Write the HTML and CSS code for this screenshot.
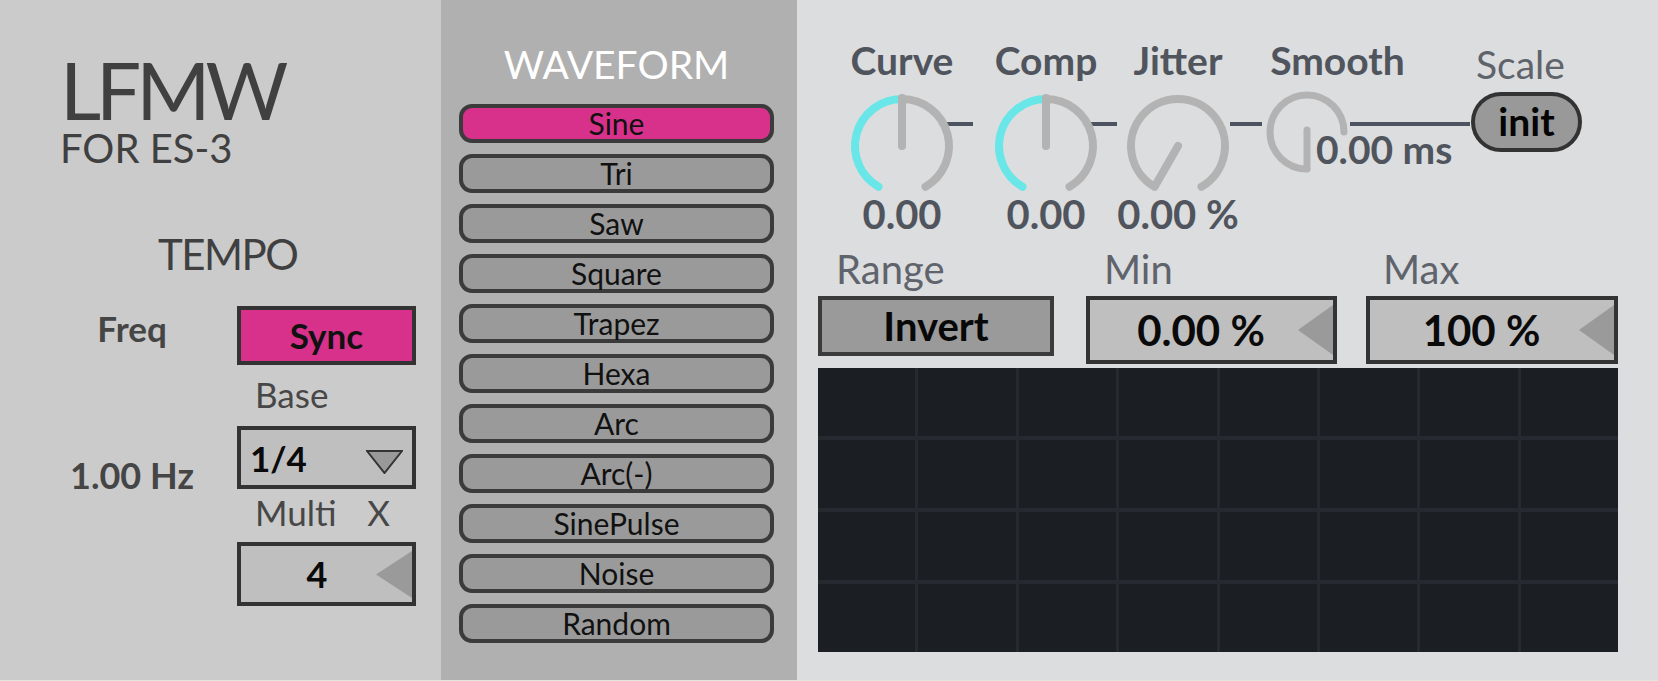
FILE: index.html
```html
<!DOCTYPE html>
<html>
<head>
<meta charset="utf-8">
<title>LFMW for ES-3</title>
<link rel="stylesheet" href="styles.css">
</head>
<body>
<div class="app">
  <section class="panel panel-main">
    <h1 class="title">LFMW</h1>
    <div class="subtitle">FOR ES-3</div>
    <div class="section-title">TEMPO</div>
    <div class="tempo">
      <div class="tempo-labels">
        <div class="freq-label">Freq</div>
        <div class="freq-value">1.00 Hz</div>
      </div>
      <div class="tempo-controls">
        <div class="toggle">Sync</div>
        <div class="ctl-label">Base</div>
        <div class="menu">
          <span>1/4</span>
          <svg class="menu-arrow" width="37" height="24" viewBox="0 0 37 24"><polygon points="1,1 36,1 18.5,23" fill="#999" stroke="#333" stroke-width="2" stroke-linejoin="miter"/></svg>
        </div>
        <div class="ctl-label multi"><span>Multi</span><span>X</span></div>
        <div class="numbox numbox-small">
          <span class="num">4</span>
          <svg width="36" height="47" viewBox="0 0 36 47"><polygon points="36,0 36,47 0,23.5" fill="#9a9a9a"/></svg>
        </div>
      </div>
    </div>
  </section>

  <section class="panel panel-wave">
    <div class="wave-title">WAVEFORM</div>
    <div class="wave-list">
      <div class="wave-btn on">Sine</div>
      <div class="wave-btn">Tri</div>
      <div class="wave-btn">Saw</div>
      <div class="wave-btn">Square</div>
      <div class="wave-btn">Trapez</div>
      <div class="wave-btn">Hexa</div>
      <div class="wave-btn">Arc</div>
      <div class="wave-btn">Arc(-)</div>
      <div class="wave-btn">SinePulse</div>
      <div class="wave-btn">Noise</div>
      <div class="wave-btn">Random</div>
    </div>
  </section>

  <section class="panel panel-mod">
    <div class="knob-row">
      <div class="knob">
        <div class="knob-label">Curve</div>
        <svg width="110" height="114" viewBox="0 0 110 114">
          <line x1="96" y1="44" x2="126" y2="44" stroke="#4d5360" stroke-width="4"/>
          <path d="M31.5 106.7 A47 47 0 0 1 55 19" fill="none" stroke="#68e6e8" stroke-width="8" stroke-linecap="round"/>
          <path d="M55 19 A47 47 0 0 1 78.5 106.7" fill="none" stroke="#b3b3b3" stroke-width="8" stroke-linecap="round"/>
          <line x1="55" y1="66" x2="55" y2="18" stroke="#b3b3b3" stroke-width="8" stroke-linecap="round"/>
        </svg>
        <div class="knob-value">0.00</div>
      </div>
      <div class="knob k2">
        <div class="knob-label">Comp</div>
        <svg width="110" height="114" viewBox="0 0 110 114">
          <line x1="96" y1="44" x2="126" y2="44" stroke="#4d5360" stroke-width="4"/>
          <path d="M31.5 106.7 A47 47 0 0 1 55 19" fill="none" stroke="#68e6e8" stroke-width="8" stroke-linecap="round"/>
          <path d="M55 19 A47 47 0 0 1 78.5 106.7" fill="none" stroke="#b3b3b3" stroke-width="8" stroke-linecap="round"/>
          <line x1="55" y1="66" x2="55" y2="18" stroke="#b3b3b3" stroke-width="8" stroke-linecap="round"/>
        </svg>
        <div class="knob-value">0.00</div>
      </div>
      <div class="knob k3">
        <div class="knob-label">Jitter</div>
        <svg width="110" height="114" viewBox="0 0 110 114">
          <line x1="107" y1="44" x2="139" y2="44" stroke="#4d5360" stroke-width="4"/>
          <path d="M31.5 106.7 A47 47 0 1 1 78.5 106.7" fill="none" stroke="#b3b3b3" stroke-width="8" stroke-linecap="round"/>
          <line x1="55" y1="66" x2="32" y2="106" stroke="#b3b3b3" stroke-width="8" stroke-linecap="round"/>
        </svg>
        <div class="knob-value">0.00 %</div>
      </div>
      <div class="knob knob-smooth">
        <div class="knob-label">Smooth</div>
        <svg width="151" height="100" viewBox="0 0 151 100">
          <line x1="88" y1="44" x2="208" y2="44" stroke="#4d5360" stroke-width="4"/>
          <path d="M45 89 A37 37 0 1 1 82 52" fill="none" stroke="#b3b3b3" stroke-width="7" stroke-linecap="round"/>
          <line x1="45" y1="50" x2="45" y2="88" stroke="#b3b3b3" stroke-width="7" stroke-linecap="round"/>
        </svg>
        <div class="knob-value smooth-value">0.00 ms</div>
      </div>
      <div class="knob knob-scale">
        <div class="scale-label">Scale</div>
        <div class="pill">init</div>
      </div>
    </div>

    <div class="range-row">
      <div class="range-col col-range">
        <div class="range-label">Range</div>
        <div class="range-btn">Invert</div>
      </div>
      <div class="range-col col-min">
        <div class="range-label">Min</div>
        <div class="numbox numbox-wide">
          <span class="num">0.00 %</span>
          <svg width="35" height="50" viewBox="0 0 35 50"><polygon points="35,0 35,50 0,25" fill="#9a9a9a"/></svg>
        </div>
      </div>
      <div class="range-col col-max">
        <div class="range-label">Max</div>
        <div class="numbox numbox-wide">
          <span class="num">100 %</span>
          <svg width="35" height="50" viewBox="0 0 35 50"><polygon points="35,0 35,50 0,25" fill="#9a9a9a"/></svg>
        </div>
      </div>
    </div>

    <div class="scope">
      <div></div><div></div><div></div><div></div><div></div><div></div><div></div><div></div>
      <div></div><div></div><div></div><div></div><div></div><div></div><div></div><div></div>
      <div></div><div></div><div></div><div></div><div></div><div></div><div></div><div></div>
      <div></div><div></div><div></div><div></div><div></div><div></div><div></div><div></div>
    </div>
  </section>
</div>
</body>
</html>
```

FILE: styles.css
```css
* { box-sizing: border-box; }

html, body {
  margin: 0;
  padding: 0;
}

body {
  width: 1658px;
  height: 681px;
  overflow: hidden;
  background: #e4e4de;
  font-family: Lato, "Open Sans", "DejaVu Sans", sans-serif;
}

.app {
  display: flex;
  height: 680px;
}

.panel { height: 680px; }

/* ---------- left panel ---------- */
.panel-main {
  width: 441px;
  background: #cbcbcb;
  color: #404040;
}

.title {
  margin: 54px 0 0 60px;
  font-size: 80px;
  line-height: 70px;
  letter-spacing: -5px;
  font-weight: 400;
  color: #404040;
}

.subtitle {
  margin: 5px 0 0 60px;
  font-size: 40px;
  line-height: 38px;
}

.section-title {
  margin: 66px 0 0 158px;
  font-size: 42px;
  line-height: 42px;
  letter-spacing: -1.5px;
}

.tempo {
  display: flex;
  padding-left: 27px;
}

.tempo-labels {
  width: 210px;
  text-align: center;
  font-weight: 700;
  color: #454545;
}

.freq-label {
  margin-top: 36px;
  font-size: 35px;
  line-height: 35px;
}

.freq-value {
  margin-top: 111px;
  font-size: 36px;
  line-height: 36px;
}

.tempo-controls {
  width: 179px;
  padding-top: 31px;
  display: flex;
  flex-direction: column;
}

.toggle {
  height: 59px;
  border: 4px solid #333;
  background: #d8318b;
  display: flex;
  align-items: center;
  justify-content: center;
  padding-bottom: 2px;
  font-size: 35px;
  font-weight: 700;
  color: #111;
}

.ctl-label {
  margin-top: 12px;
  padding-left: 18px;
  font-size: 35px;
  line-height: 35px;
  color: #474747;
}

.ctl-label.multi {
  margin-top: 6px;
  display: flex;
  justify-content: space-between;
  padding-right: 26px;
}

.menu {
  margin-top: 14px;
  height: 63px;
  border: 4px solid #333;
  background: #bfbfbf;
  display: flex;
  align-items: center;
  justify-content: space-between;
  padding: 0 9px 0 9px;
  font-size: 35px;
  font-weight: 700;
  color: #0a0a0a;
}

.menu-arrow {
  display: block;
  margin-top: 9px;
}

.numbox {
  border: 4px solid #333;
  background: #bfbfbf;
  display: flex;
  align-items: center;
  color: #0a0a0a;
}

.numbox svg { display: block; flex: none; }

.numbox .num {
  flex: 1;
  text-align: center;
}

.numbox-small {
  margin-top: 12px;
  height: 64px;
  font-size: 36px;
  font-weight: 700;
}

.numbox-small .num { padding-left: 17px; }

/* ---------- waveform panel ---------- */
.panel-wave {
  width: 356px;
  background: #b0b0b0;
  padding: 0 23px 0 18px;
}

.wave-title {
  margin-top: 45px;
  font-size: 39px;
  line-height: 39px;
  text-align: center;
  color: #ffffff;
}

.wave-list {
  margin-top: 20px;
  display: flex;
  flex-direction: column;
  gap: 11px;
}

.wave-btn {
  height: 39px;
  border: 4px solid #3b3b3b;
  border-radius: 13px;
  background: #9a9a9a;
  display: flex;
  align-items: center;
  justify-content: center;
  padding-bottom: 1px;
  font-size: 30px;
  line-height: 30px;
  color: #111;
}

.wave-btn.on { background: #d8318b; }

/* ---------- modulation panel ---------- */
.panel-mod {
  flex: 1;
  background: #dcdddf;
  padding-left: 21px;
}

.knob-row {
  display: flex;
  align-items: flex-start;
  padding: 41px 0 0 29px;
}

.knob {
  width: 110px;
  display: flex;
  flex-direction: column;
  align-items: center;
  color: #50555d;
}

.knob svg {
  display: block;
  overflow: visible;
}

.k2 { margin-left: 34px; }
.k3 { margin-left: 22px; }

.knob-label {
  font-size: 39px;
  line-height: 39px;
  font-weight: 700;
  white-space: nowrap;
}

.knob-value {
  font-size: 40px;
  line-height: 40px;
  font-weight: 700;
  white-space: nowrap;
}

.knob-smooth {
  width: 151px;
  margin-left: 29px;
  align-items: stretch;
}

.knob-smooth .knob-label { text-align: center; }

.smooth-value {
  margin-top: -50px;
  padding-left: 54px;
  font-size: 39px;
  line-height: 39px;
  position: relative;
}

.knob-scale {
  width: 111px;
  margin-left: 58px;
  align-items: stretch;
}

.scale-label {
  margin-top: 4px;
  padding-left: 5px;
  font-size: 39px;
  line-height: 39px;
  color: #5f636b;
}

.pill {
  margin-top: 8px;
  height: 60px;
  border: 4px solid #333;
  border-radius: 30px;
  background: #999;
  display: flex;
  align-items: center;
  justify-content: center;
  padding-bottom: 3px;
  font-size: 39px;
  font-weight: 700;
  color: #050505;
}

.range-row {
  display: flex;
  align-items: flex-start;
  margin-top: 14.5px;
}

.col-range { width: 236px; }
.col-min { width: 251px; margin-left: 32px; }
.col-max { width: 252px; margin-left: 29px; }

.range-label {
  padding-left: 18px;
  font-size: 40px;
  line-height: 40px;
  color: #5f636b;
}

.col-max .range-label { padding-left: 17px; }

.range-btn {
  margin-top: 7.5px;
  height: 60px;
  border: 4px solid #3b3b3b;
  background: #9a9a9a;
  display: flex;
  align-items: center;
  justify-content: center;
  font-size: 40px;
  font-weight: 700;
  color: #080808;
}

.numbox-wide {
  margin-top: 7.5px;
  height: 68px;
  font-size: 42px;
  font-weight: 700;
}

.numbox-wide .num { padding-left: 14px; }

.scope {
  margin-top: 4px;
  width: 800px;
  height: 284px;
  display: grid;
  grid-template-columns: repeat(8, 1fr);
  grid-template-rows: repeat(4, 1fr);
  column-gap: 3px;
  row-gap: 4px;
  background: #262a30;
}

.scope div { background: #1b1e22; }
```
